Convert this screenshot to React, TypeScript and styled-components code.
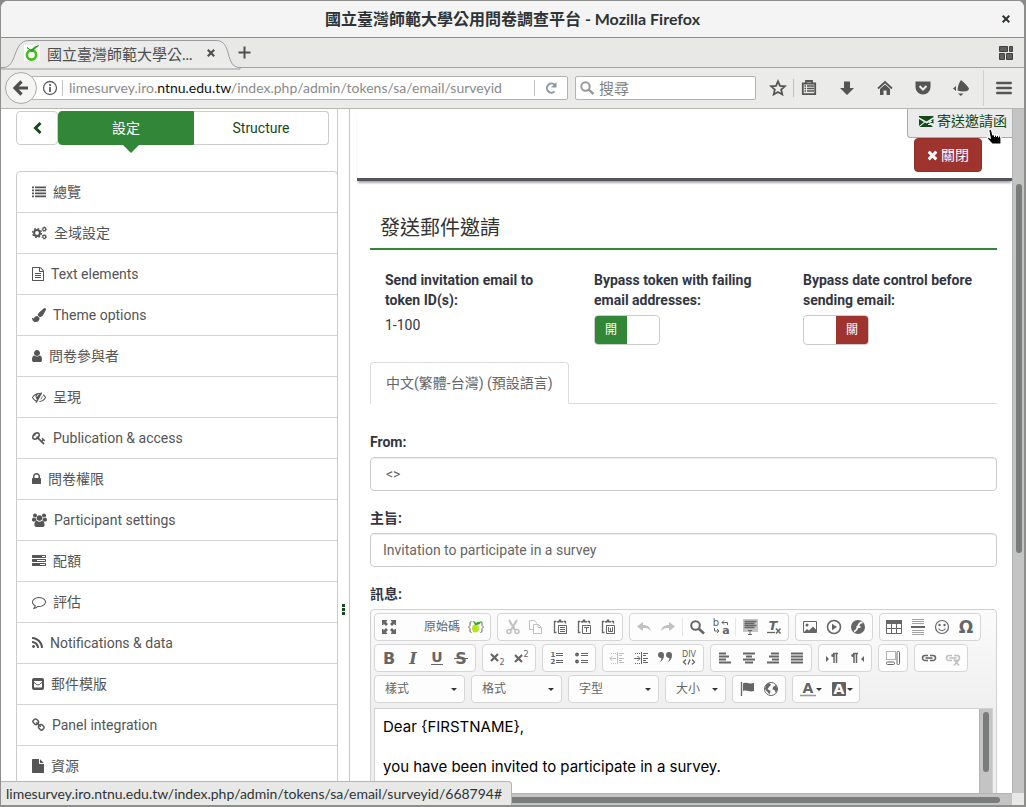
import React from "react";
import styled, { createGlobalStyle, css } from "styled-components";

const uiFont = `Lato, "Noto Sans CJK TC", sans-serif`;
const pageFont = `Roboto, "Noto Sans CJK TC", sans-serif`;
const green = "#328637";
const darkGreen = "#14491a";
const red = "#9f342f";

const GlobalStyle = createGlobalStyle`
  *, *::before, *::after { box-sizing: border-box; }
  body { margin: 0; background: #8a8a88; font-family: ${uiFont}; }
  button, input, select, textarea { font: inherit; color: inherit; margin: 0; }
  svg { display: block; flex: none; overflow: visible; }
`;

/* ---------- window frame ---------- */

const BrowserWindow = styled.div`
  position: relative;
  display: flex;
  flex-direction: column;
  height: 100vh;
  overflow: hidden;
  background: #fff;
  border: solid #8e8e8c;
  border-width: 1px 2px 2px 1px;
  border-radius: 8px 8px 0 0;
`;

const TitleBar = styled.header`
  display: grid;
  grid-template-columns: 36px 1fr 36px;
  align-items: center;
  height: 37px;
  background: #f4f4f4;
  border-bottom: 1px solid #8e908e;
`;

const WindowTitle = styled.h1`
  grid-column: 2;
  margin: 0;
  text-align: center;
  font-size: 16px;
  font-weight: 700;
  line-height: 20px;
  color: #2e3436;
  white-space: nowrap;
`;

const PlainButton = styled.button<{ $w?: number }>`
  display: flex;
  align-items: center;
  justify-content: center;
  flex: none;
  width: ${(p) => p.$w ?? 24}px;
  height: 24px;
  padding: 0;
  border: 0;
  background: none;
  color: #555;
`;

const TabStrip = styled.div`
  display: flex;
  align-items: center;
  height: 30px;
  padding: 0 6px 0 11px;
  background: #e8e8e6;
  border-bottom: 1px solid #a0a2a4;
`;

const BrowserTab = styled.div`
  position: relative;
  display: flex;
  align-items: center;
  gap: 7px;
  width: 218px;
  height: 30px;
  padding: 1px 15px 0 12px;
  font-size: 15px;
  color: #4a4e50;
`;

const TabShape = styled.svg`
  position: absolute;
  left: -10px;
  top: 1px;
`;

const TabLabel = styled.span`
  position: relative;
  flex: 1;
  white-space: nowrap;
`;

const Raised = styled.span`
  position: relative;
  display: flex;
`;

const Spacer = styled.div`
  flex: 1;
`;

const NavBar = styled.nav`
  display: flex;
  align-items: center;
  height: 41px;
  padding: 0 7px 0 4px;
  background: #ebebe9;
  border-bottom: 1px solid #b6b6b0;
  color: #505050;
`;

const BackButton = styled.button`
  position: relative;
  z-index: 1;
  display: flex;
  align-items: center;
  justify-content: center;
  flex: none;
  width: 32px;
  height: 32px;
  margin-right: -6px;
  padding: 0;
  border: 1px solid #a9a9a4;
  border-radius: 50%;
  background: #f5f5f4;
  color: #505050;
`;

const AddressBar = styled.div`
  display: flex;
  align-items: center;
  flex: 3 1 0;
  min-width: 0;
  height: 24px;
  padding-left: 10px;
  border: 1px solid #b4b4ae;
  border-radius: 2px;
  background: #fff;
`;

const Address = styled.div`
  flex: 1;
  min-width: 0;
  margin: 0 20px 0 2px;
  overflow: hidden;
  white-space: nowrap;
  font-size: 14px;
  line-height: 22px;
  color: #8a8a8a;
  outline: 0;
  b {
    font-weight: 400;
    color: #111;
  }
`;

const Divider = styled.span<{ $h: number }>`
  flex: none;
  width: 1px;
  height: ${(p) => p.$h}px;
  background: #c2c2be;
`;

const SearchField = styled.label`
  display: flex;
  align-items: center;
  gap: 5px;
  flex: 1 1 0;
  min-width: 0;
  height: 24px;
  margin: 0 7px;
  padding-left: 4px;
  border: 1px solid #b4b4ae;
  border-radius: 2px;
  background: #fff;
  color: #999;
  input {
    flex: 1;
    min-width: 0;
    padding: 0;
    border: 0;
    background: none;
    font-size: 15px;
    line-height: 22px;
  }
  input::placeholder {
    color: #808080;
  }
`;

const NavTools = styled.div`
  display: flex;
  align-items: center;
  flex: none;
`;

const Viewport = styled.div`
  display: grid;
  grid-template-columns: minmax(0, 1fr) 12px;
  grid-template-rows: minmax(0, 1fr) 12px;
  flex: 1;
  min-height: 0;
`;

const Page = styled.div`
  display: flex;
  overflow: hidden;
  font-family: ${pageFont};
  font-size: 14px;
  line-height: 20px;
`;

const VerticalTrack = styled.div`
  position: relative;
  padding: 75px 2px 0 3px;
  background: #c3c4c3;
  border-left: 1px solid #b2b3b2;
`;

const VerticalThumb = styled.div<{ $h: number }>`
  height: ${(p) => p.$h}px;
  border-radius: 3px;
  background: #787c7b;
`;

const HorizontalTrack = styled.div`
  padding: 3px 12px 2px 3px;
  background: #c3c4c3;
  border-top: 1px solid #b2b3b2;
`;

const HorizontalThumb = styled.div`
  height: 6px;
  border-radius: 3px;
  background: #787c7b;
`;

const Corner = styled.div`
  background: #e8e8e6;
`;

const StatusText = styled.div`
  position: absolute;
  left: 0;
  bottom: 0;
  height: 24px;
  padding: 0 9px 0 5px;
  border: solid #b4b4b0;
  border-width: 1px 1px 0 0;
  border-radius: 0 4px 0 0;
  background: #e8e8e6;
  color: #2e3436;
  font-size: 14px;
  line-height: 23px;
  white-space: nowrap;
`;

/* ---------- side menu ---------- */

const Sidebar = styled.aside`
  flex: none;
  width: 337px;
  padding-top: 2px;
  border-right: 1px solid #ccc;
`;

const ModeBar = styled.div`
  display: flex;
  padding: 0 8px 0 15px;
`;

const ModeButton = styled.button<{ $kind: "back" | "active" | "plain" }>`
  position: relative;
  display: flex;
  align-items: center;
  justify-content: center;
  flex: ${(p) => (p.$kind === "back" ? "0 0 42px" : "1 1 0")};
  height: 34px;
  padding: 0;
  border: 1px solid #ccc;
  border-radius: 4px;
  background: #fff;
  color: ${darkGreen};
  ${(p) =>
    p.$kind === "active" &&
    css`
      border-color: ${green};
      border-radius: 4px 0 0 4px;
      background: ${green};
      color: #fff;
      &::after {
        content: "";
        position: absolute;
        top: 33px;
        left: 50%;
        margin-left: -3px;
        border: 8px solid transparent;
        border-bottom: 0;
        border-top-color: ${green};
      }
    `}
  ${(p) =>
    p.$kind === "plain" &&
    css`
      border-left: 0;
      border-radius: 0 4px 4px 0;
    `}
`;

const MenuList = styled.ul`
  margin: 26px -1px 0 15px;
  padding: 0;
  list-style: none;
  border: 1px solid #ccc;
  border-radius: 4px 4px 0 0;
`;

const MenuLink = styled.a`
  display: flex;
  align-items: center;
  gap: 7px;
  height: 41px;
  padding-left: 15px;
  border-bottom: 1px solid #d4d4d4;
  color: #555;
  text-decoration: none;
`;

const DragHandle = styled.div`
  display: flex;
  justify-content: center;
  flex: none;
  width: 12px;
  padding-top: 495px;
  border-right: 1px solid #c4c4c4;
  color: ${darkGreen};
`;

/* ---------- main area ---------- */

const Main = styled.main`
  flex: 1;
  min-width: 0;
  padding-left: 7px;
  color: #333641;
`;

const ActionBar = styled.div`
  display: flex;
  flex-direction: column;
  align-items: flex-end;
  height: 72px;
  border-bottom: 3px solid #54545e;
  box-shadow: 0 3px 2px -1px #aaa;
`;

const SendLink = styled.a`
  position: relative;
  display: flex;
  align-items: center;
  gap: 3px;
  height: 29px;
  padding: 0 5px 4px 11px;
  border: solid #aaa;
  border-width: 0 0 1px 1px;
  border-radius: 0 0 0 4px;
  background: #ebebeb;
  color: ${darkGreen};
  text-decoration: none;
`;

const Pointer = styled.svg`
  position: absolute;
  right: 10px;
  top: 19px;
`;

const CloseButton = styled.button`
  display: flex;
  align-items: center;
  gap: 3px;
  height: 34px;
  margin-right: 30px;
  padding: 0 12px;
  border: 1px solid #8c2f2a;
  border-radius: 4px;
  background: ${red};
  color: #fff;
`;

const FormArea = styled.form`
  margin: 32px 15px 0 13px;
`;

const Heading = styled.h2`
  margin: 0 0 20px;
  padding: 0 10px 5px;
  border-bottom: 2px solid ${green};
  font-size: 20px;
  font-weight: 400;
  line-height: 30px;
  color: #333;
`;

const Options = styled.div`
  display: grid;
  grid-template-columns: repeat(3, 1fr);
  height: 92px;
`;

const Option = styled.div`
  padding: 0 15px;
`;

const OptionTitle = styled.div`
  margin-bottom: 5px;
  font-weight: 700;
`;

const Switch = styled.label<{ $on: boolean }>`
  display: grid;
  grid-template-columns: 1fr 1fr;
  width: 66px;
  height: 30px;
  overflow: hidden;
  border: 1px solid #ccc;
  border-radius: 4px;
  background: #fff;
  input {
    position: absolute;
    opacity: 0;
    pointer-events: none;
  }
  span {
    grid-column: ${(p) => (p.$on ? 1 : 2)};
    background: ${(p) => (p.$on ? green : red)};
    color: #fff;
    font-size: 12px;
    line-height: 28px;
    text-align: center;
  }
`;

const LanguageTabs = styled.div`
  display: flex;
  height: 42px;
  margin-bottom: 28px;
  border-bottom: 1px solid #ddd;
`;

const LanguageTab = styled.button`
  height: 42px;
  padding: 0 15px;
  border: 1px solid #ddd;
  border-bottom-color: #fff;
  border-radius: 4px 4px 0 0;
  background: #fff;
  color: #666;
`;

const Field = styled.div`
  margin-bottom: 17px;
`;

const FieldLabel = styled.label`
  display: block;
  margin-bottom: 5px;
  font-weight: 700;
`;

const TextInput = styled.input<{ $indent?: number }>`
  display: block;
  width: 100%;
  height: 34px;
  padding: 0 12px 0 ${(p) => p.$indent ?? 12}px;
  border: 1px solid #ccc;
  border-radius: 4px;
  background: #fff;
  box-shadow: inset 0 1px 1px #eee;
  color: #666;
`;

/* ---------- rich text editor ---------- */

const Editor = styled.div`
  padding: 0 3px 0 4px;
  border: 1px solid #d1d1d1;
  border-radius: 4px 4px 0 0;
  background: #efefef linear-gradient(#fbfbfb, #efefef 98px, #efefef);
`;

const Toolbar = styled.div`
  display: flex;
  flex-direction: column;
  gap: 3px;
  padding: 3px 0 5px;
  margin-left: -1px;
  color: #666;
`;

const ToolRow = styled.div`
  display: flex;
  flex-wrap: wrap;
  gap: 3px 6px;
`;

const ToolGroup = styled.div`
  display: flex;
  align-items: center;
  height: 28px;
  padding: 0 2px;
  border: 1px solid #d6d6d6;
  border-radius: 4px;
  background: #fdfdfd;
`;

const ToolButton = styled.button<{ $w?: number; $off?: boolean }>`
  display: flex;
  align-items: center;
  justify-content: center;
  width: ${(p) => p.$w ?? 24}px;
  height: 24px;
  padding: 0;
  border: 0;
  background: none;
  color: inherit;
  opacity: ${(p) => (p.$off ? 0.4 : 1)};
`;

const SourceButton = styled.button`
  width: 63px;
  height: 24px;
  padding: 0 4px 0 23px;
  border: 0;
  background: none;
  font-size: 12px;
  line-height: 24px;
  white-space: nowrap;
`;

const ToolSeparator = styled.span`
  width: 1px;
  height: 18px;
  margin: 0 2px;
  background: #e6e6e6;
`;

const Combo = styled.span<{ $w: number }>`
  display: grid;
  grid-template-columns: 1fr 20px;
  align-items: center;
  width: ${(p) => p.$w}px;
  height: 28px;
  border: 1px solid #d6d6d6;
  border-radius: 4px;
  background: #fdfdfd;
  select {
    grid-area: 1 / 1 / 2 / 3;
    height: 26px;
    padding: 0 0 0 10px;
    border: 0;
    background: none;
    appearance: none;
    font-size: 12px;
  }
  svg {
    grid-area: 1 / 2;
    justify-self: center;
    pointer-events: none;
  }
`;

const EditorBody = styled.div`
  display: flex;
  margin: 0 0 0 -1px;
  height: 200px;
  border: 1px solid #d1d1d1;
  background: #fff;
`;

const EditorText = styled.textarea`
  flex: 1;
  min-width: 0;
  padding: 8px;
  border: 0;
  resize: none;
  overflow: hidden;
  background: #fff;
  color: #000;
  font-family: Inter, sans-serif;
  font-size: 15px;
  line-height: 20px;
`;

const EditorTrack = styled.div`
  width: 13px;
  padding: 3px 3px 0;
  background: #c3c4c3;
  border-left: 1px solid #b2b3b2;
`;

/* ---------- icons ---------- */

type FontIconProps = { d: string; x?: number; w?: number; size?: number };

/* Icons on a 1792-unit grid, 128 units to the pixel. */
const FontIcon = ({ d, x = 0, w = 1792, size = 14 }: FontIconProps) => (
  <svg width={Math.round((w * size) / 1792)} height={size} viewBox={`${x} 0 ${w} 1792`} fill="currentColor" aria-hidden>
    <path d={d} />
  </svg>
);

const paths = {
  file: "M1152 512v-472q22 14 36 28l408 408q14 14 28 36h-472zm-128 32q0 40 28 68t68 28h544v1056q0 40-28 68t-68 28h-1344q-40 0-68-28t-28-68v-1600q0-40 28-68t68-28h800v544z",
  fileText:
    "M1596 380q28 28 48 76t20 88v1152q0 40-28 68t-68 28h-1344q-40 0-68-28t-28-68v-1600q0-40 28-68t68-28h896q40 0 88 20t76 48zm-444-244v376h376q-10-29-22-41l-313-313q-12-12-41-22zm384 1528v-1024h-416q-40 0-68-28t-28-68v-416h-768v1536h1280zm-1024-864q0-14 9-23t23-9h704q14 0 23 9t9 23v64q0 14-9 23t-23 9h-704q-14 0-23-9t-9-23v-64zm736 224q14 0 23 9t9 23v64q0 14-9 23t-23 9h-704q-14 0-23-9t-9-23v-64q0-14 9-23t23-9h704zm0 256q14 0 23 9t9 23v64q0 14-9 23t-23 9h-704q-14 0-23-9t-9-23v-64q0-14 9-23t23-9h704z",
  list: "M0 192h256v224h-256zM384 192h1408v224h-1408zM0 576h256v224h-256zM384 576h1408v224h-1408zM0 960h256v224h-256zM384 960h1408v224h-1408zM0 1344h256v224h-256zM384 1344h1408v224h-1408z",
  brush:
    "M1615 0q70 0 122.5 46.5t52.5 116.5q0 63-45 151-332 629-465 752-97 91-218 91-126 0-216.5-92.5t-90.5-219.5q0-128 92-212l638-579q59-54 130-54zm-909 1034q39 76 106.5 130t150.5 76l1 71q4 213-129.5 347t-348.5 134q-123 0-218-46.5t-152.5-127.5-86.5-183-29-220q7 5 41 30t62 44.5 59 36.5 46 17q41 0 55-37 25-66 57.5-112.5t69.5-76 88-47.5 103-25.5 125-10.5z",
  user: "M1536 1399q0 109-62.5 187t-150.5 78h-854q-88 0-150.5-78t-62.5-187q0-85 8.5-160.5t31.5-152 58.5-131 94-89 134.5-34.5q131 128 313 128t313-128q76 0 134.5 34.5t94 89 58.5 131 31.5 152 8.5 160.5zm-256-887q0 159-112.5 271.5t-271.5 112.5-271.5-112.5-112.5-271.5 112.5-271.5 271.5-112.5 271.5 112.5 112.5 271.5z",
  eyeSlash:
    "M555 1335l78-141q-87-63-136-159t-49-203q0-121 61-225-229 117-381 353 167 258 427 375zm389-759q0-20-14-34t-34-14q-125 0-214.5 89.5t-89.5 214.5q0 20 14 34t34 14 34-14 14-34q0-86 61-147t147-61q20 0 34-14t14-34zm363-191q0 7-1 9-106 189-316 567t-315 566l-49 89q-10 16-28 16-12 0-134-70-16-10-16-28 0-12 44-87-143-65-263.5-173t-208.5-245q-20-31-20-69t20-69q153-235 380-371t496-136q89 0 180 17l54-97q10-16 28-16 5 0 18 6t31 15.5 33 18.5 31.5 18.5 19.5 11.5q16 10 16 27zm37 447q0 139-79 253.5t-209 164.5l280-502q8 45 8 84zm448 128q0 35-20 69-39 64-109 145-150 172-347.5 267t-419.5 95l74-132q212-18 392.5-137t301.5-307q-115-179-282-294l63-112q95 64 182.5 153t144.5 184q20 34 20 69z",
  key: "M832 512q0-80-56-136t-136-56-136 56-56 136q0 42 19 83-41-19-83-19-80 0-136 56t-56 136 56 136 136 56 136-56 56-136q0-42-19-83 41 19 83 19 80 0 136-56t56-136zm851 704q0 17-49 66t-66 49q-9 0-28.5-16t-36.5-33-38.5-40-24.5-26l-96 96 220 220q28 28 28 68 0 42-39 81t-81 39q-40 0-68-28l-671-671q-176 131-365 131-163 0-265.5-102.5t-102.5-265.5q0-160 95-313t248-248 313-95q163 0 265.5 102.5t102.5 265.5q0 189-131 365l355 355 96-96q-3-3-26-24.5t-40-38.5-33-36.5-16-28.5q0-17 49-66t66-49q13 0 23 10 6 6 46 44.5t82 79.5 86.5 86 73 78 28.5 41z",
  lock: "M640 768h512v-192q0-106-75-181t-181-75-181 75-75 181v192zm832 96v576q0 40-28 68t-68 28h-960q-40 0-68-28t-28-68v-576q0-40 28-68t68-28h32v-192q0-184 132-316t316-132 316 132 132 316v192h32q40 0 68 28t28 68z",
  tasks:
    "M1024 1408h640v-128h-640v128zm-384-512h1024v-128h-1024v128zm640-512h384v-128h-384v128zm512 832v256q0 26-19 45t-45 19h-1664q-26 0-45-19t-19-45v-256q0-26 19-45t45-19h1664q26 0 45 19t19 45zm0-512v256q0 26-19 45t-45 19h-1664q-26 0-45-19t-19-45v-256q0-26 19-45t45-19h1664q26 0 45 19t19 45zm0-512v256q0 26-19 45t-45 19h-1664q-26 0-45-19t-19-45v-256q0-26 19-45t45-19h1664q26 0 45 19t19 45z",
  comment:
    "M896 384q-204 0-381.5 69.5t-282 187.5-104.5 255q0 112 71.5 213.5t201.5 175.5l87 50-27 96q-24 91-70 172 152-63 275-171l43-38 57 6q69 8 130 8 204 0 381.5-69.5t282-187.5 104.5-255-104.5-255-282-187.5-381.5-69.5zm896 512q0 174-120 321.5t-326 233-450 85.5q-70 0-145-8-198 175-460 242-49 14-114 22h-5q-15 0-27-10.5t-16-27.5v-1q-3-4-.5-12t2-10 4.5-9.5l6-9 7-8.5 8-9q7-8 31-34.5t34.5-38 31-39.5 32.5-51 27-59 26-76q-157-89-247.5-220t-90.5-281q0-174 120-321.5t326-233 450-85.5 450 85.5 326 233 120 321.5z",
  rss: "M576 1344q0 80-56 136t-136 56-136-56-56-136 56-136 136-56 136 56 56 136zm512 123q2 28-17 48-18 21-47 21h-135q-25 0-43-16.5t-20-41.5q-22-229-184.5-391.5t-391.5-184.5q-25-2-41.5-20t-16.5-43v-135q0-29 21-47 17-17 43-17h5q160 13 306 80.5t259 181.5q114 113 181.5 259t80.5 306zm512 2q2 27-18 47-18 20-46 20h-143q-26 0-44.5-17.5t-19.5-42.5q-12-215-101-408.5t-231.5-336-336-231.5-408.5-102q-25-1-42.5-19.5t-17.5-43.5v-143q0-28 20-46 18-18 44-18h3q262 13 501.5 120t425.5 294q187 186 294 425.5t120 501.5z",
  link: "M1520 1216q0-40-28-68l-208-208q-28-28-68-28-42 0-72 32 3 3 19 18.5t21.5 21.5 15 19 13 25.5 3.5 27.5q0 40-28 68t-68 28q-15 0-27.5-3.5t-25.5-13-19-15-21.5-21.5-18.5-19q-33 31-33 73 0 40 28 68l206 207q27 27 68 27 40 0 68-26l147-146q28-28 28-67zm-703-705q0-40-28-68l-206-207q-28-28-68-28-39 0-68 27l-147 146q-28 28-28 67 0 40 28 68l208 208q27 27 68 27 42 0 72-31-3-3-19-18.5t-21.5-21.5-15-19-13-25.5-3.5-27.5q0-40 28-68t68-28q15 0 27.5 3.5t25.5 13 19 15 21.5 21.5 18.5 19q33-31 33-73zm895 705q0 120-85 203l-147 146q-83 83-203 83-121 0-204-85l-206-207q-83-83-83-203 0-123 88-209l-88-88q-86 88-208 88-120 0-204-84l-208-208q-84-84-84-204t85-203l147-146q83-83 203-83 121 0 204 85l206 207q83 83 83 203 0 123-88 209l88 88q86-88 208-88 120 0 204 84l208 208q84 84 84 204z",
  cross:
    "M1490 1322q0 40-28 68l-136 136q-28 28-68 28t-68-28l-294-294-294 294q-28 28-68 28t-68-28l-136-136q-28-28-28-68t28-68l294-294-294-294q-28-28-28-68t28-68l136-136q28-28 68-28t68 28l294 294 294-294q28-28 68-28t68 28l136 136q28 28 28 68t-28 68l-294 294 294 294q28 28 28 68z",
};

const CogsIcon = () => (
  <svg width="15" height="14" viewBox="0 0 15 14" fill="none" stroke="currentColor" aria-hidden>
    <circle cx="5" cy="7" r="2.9" strokeWidth="2" />
    <circle cx="5" cy="7" r="4.4" strokeWidth="1.4" strokeDasharray="1.7 1.76" />
    <circle cx="12.3" cy="3.2" r="1.5" strokeWidth="1.2" />
    <circle cx="12.3" cy="3.2" r="2.3" strokeWidth="0.8" strokeDasharray="1 0.8" />
    <circle cx="12.3" cy="10.8" r="1.5" strokeWidth="1.2" />
    <circle cx="12.3" cy="10.8" r="2.3" strokeWidth="0.8" strokeDasharray="1 0.8" />
  </svg>
);

const UsersIcon = () => (
  <svg width="15" height="14" viewBox="0 0 15 14" fill="currentColor" aria-hidden>
    <circle cx="3" cy="2.6" r="2" />
    <circle cx="12" cy="2.6" r="2" />
    <path d="M0 7.3C0 5.5.6 4.6 1.3 4.6c1 .8 2.2.8 3 .3C4 6 4.3 6.8 4.8 7.4 4 7.4 3.4 7.9 3 8.4H1.2C.5 8.4 0 8 0 7.3zM15 7.3c0-1.8-.6-2.7-1.3-2.7-1 .8-2.2.8-3 .3.3 1.1 0 1.9-.5 2.5.8 0 1.4.5 1.8 1h1.8c.7 0 1.2-.4 1.2-1.1z" />
    <circle cx="7.5" cy="5" r="2.8" />
    <path d="M2.4 12c0-2.500.8-4.200 2.400-4.200 1.700 1.300 3.700 1.300 5.400 0 1.600 0 2.400 1.700 2.400 4.200 0 1.200-.8 1.900-1.800 1.900H4.200c-1 0-1.800-.7-1.800-1.900z" />
  </svg>
);

const MailSquareIcon = () => (
  <svg width="12" height="14" viewBox="0 0 12 14" aria-hidden>
    <rect y="1" width="12" height="12" rx="2" fill="currentColor" />
    <path d="M2 4h8v6.500H2z" fill="#fff" />
    <path d="M2 5.500 4.800 7.600q1.200.8 2.400 0L10 5.500" fill="none" stroke="currentColor" />
  </svg>
);

const SendIcon = () => (
  <svg width="15" height="13" viewBox="0 0 15 13" aria-hidden>
    <path d="M0 1h14.500v1L7.500 6.500 0 2.200zM0 4l5 3-5 4zM.5 12 6 7.600l1.500.9L9.500 7.400l4.500 4.600z" fill="currentColor" />
    <path d="M14.500 4v5l-1-1-3 0 3-1.500-1.500-1z" fill="currentColor" />
    <path d="M9 9.500h3.500l1.500 1.500" stroke="#ebebeb" fill="none" />
  </svg>
);

const Icon = ({ children, size = 16 }: { children: React.ReactNode; size?: number }) => (
  <svg width={size} height={size} viewBox="0 0 16 16" fill="none" stroke="currentColor" aria-hidden>
    {children}
  </svg>
);

const Letter = ({ x, y, size, children, italic, weight = 700, font = "DejaVu Sans" }: {
  x: number; y: number; size: number; children: string; italic?: boolean; weight?: number; font?: string;
}) => (
  <text x={x} y={y} fontFamily={font} fontSize={size} fontWeight={weight} fontStyle={italic ? "italic" : "normal"} fill="currentColor" stroke="none" textAnchor="middle">
    {children}
  </text>
);

const Caret = () => (
  <svg width="6" height="3" viewBox="0 0 6 3" fill="#333" aria-hidden>
    <path d="M0 0h6L3 3z" />
  </svg>
);

const Lines = ({ rows }: { rows: [number, number][] }) => (
  <Icon>
    {rows.map(([x, w], i) => (
      <path key={i} d={`M${x} ${3.5 + i * 3}h${w}`} strokeWidth="2" />
    ))}
  </Icon>
);

const Clipboard = ({ children }: { children?: React.ReactNode }) => (
  <Icon>
    <path d="M4.500 2.500h-2v11h2M11.500 2.500h2v2" strokeWidth="1.300" />
    <path d="M5 3.500V2h1.500l.5-1.500h2L9.500 2H11v1.500z" fill="currentColor" stroke="none" />
    <path d="M6.500 6.500h8v8h-8z" />
    {children}
  </Icon>
);

const Chain = () => (
  <>
    <path d="M7 5.500H4a2.500 2.500 0 0 0 0 5h3M9 5.500h3a2.500 2.500 0 0 1 0 5H9" strokeWidth="1.600" />
    <path d="M4.500 8h7" strokeWidth="1.600" />
  </>
);

/* ---------- data ---------- */

const menuItems: { label: string; icon: React.ReactNode }[] = [
  { label: "總覽", icon: <FontIcon d={paths.list} /> },
  { label: "全域設定", icon: <CogsIcon /> },
  { label: "Text elements", icon: <FontIcon d={paths.fileText} x={128} w={1536} /> },
  { label: "Theme options", icon: <FontIcon d={paths.brush} /> },
  { label: "問卷參與者", icon: <FontIcon d={paths.user} x={256} w={1280} /> },
  { label: "呈現", icon: <FontIcon d={paths.eyeSlash} /> },
  { label: "Publication & access", icon: <FontIcon d={paths.key} /> },
  { label: "問卷權限", icon: <FontIcon d={paths.lock} x={320} w={1152} /> },
  { label: "Participant settings", icon: <UsersIcon /> },
  { label: "配額", icon: <FontIcon d={paths.tasks} /> },
  { label: "評估", icon: <FontIcon d={paths.comment} /> },
  { label: "Notifications & data", icon: <FontIcon d={paths.rss} x={192} w={1408} /> },
  { label: "郵件模版", icon: <MailSquareIcon /> },
  { label: "Panel integration", icon: <FontIcon d={paths.link} x={64} w={1664} /> },
  { label: "資源", icon: <FontIcon d={paths.file} x={128} w={1536} /> },
];

type Tool = { name: string; icon: React.ReactNode; off?: boolean; w?: number };

const Tools = ({ items }: { items: Tool[] }) => (
  <>
    {items.map((t) => (
      <ToolButton key={t.name} type="button" aria-label={t.name} $off={t.off} $w={t.w} disabled={t.off}>
        {t.icon}
      </ToolButton>
    ))}
  </>
);

const clipboardTools: Tool[] = [
  { name: "Cut", off: true, icon: <Icon><path d="M5 1l6 10M13 1L7 11" strokeWidth="2" /><circle cx="5" cy="12.500" r="2" strokeWidth="1.500" /><circle cx="13" cy="12.500" r="2" strokeWidth="1.500" /></Icon> },
  { name: "Copy", off: true, icon: <Icon><path d="M5.500 10.500h-4v-9h5l2 2v1M5.500 5.500h5l3 3v6h-8zM10 5.500v3h3" /></Icon> },
  { name: "Paste", icon: <Clipboard><path d="M8 8.500h5M8 10.500h5M8 12.500h5" /></Clipboard> },
  { name: "Paste as text", icon: <Clipboard><path d="M8 8.500h5M10.500 8.500V13" /></Clipboard> },
  { name: "Paste from Word", icon: <Clipboard><path d="M8.500 8v4.500h4V8M10.500 9v3" /></Clipboard> },
];

const historyTools: Tool[] = [
  { name: "Undo", off: true, icon: <Icon><path d="M1 7.500 7 3v3c4 0 7 1.500 8 6-2-2.500-4.500-3-8-3v3z" fill="currentColor" stroke="none" /></Icon> },
  { name: "Redo", off: true, icon: <Icon><path d="M15 7.500 9 3v3c-4 0-7 1.500-8 6 2-2.500 4.500-3 8-3v3z" fill="currentColor" stroke="none" /></Icon> },
];

const findTools: Tool[] = [
  { name: "Find", icon: <Icon><circle cx="6.500" cy="6.500" r="4.300" strokeWidth="2" /><path d="M9.500 9.500 15 14.500" strokeWidth="2.600" /></Icon> },
  { name: "Replace", icon: <Icon><Letter x={3} y={7} size={10} weight={400}>b</Letter><Letter x={13} y={15} size={11}>a</Letter><path d="M14.500 6V3.500H9M11 1.500 9 3.500l2 2M1.500 9v3H6M4 10l2 2-2 2" /></Icon> },
];

const selectTools: Tool[] = [
  { name: "Select all", icon: <Icon><path d="M1 0h15v13H1z" fill="#c4c4c4" stroke="none" /><path d="M2.500 2.500h12M2.500 4.500h10M2.500 6.500h12M2.500 8.500h10" strokeWidth="1.300" /><path d="M6 11.500h4M8 12v3M6 15.500h4" /></Icon> },
  { name: "Remove format", icon: <Icon><Letter x={7} y={11} size={13} italic>T</Letter><path d="M1 13.500h8" strokeWidth="1.300" /><path d="M10 9.500l4.500 5M14.500 9.500l-4.500 5" strokeWidth="1.500" /></Icon> },
];

const mediaTools: Tool[] = [
  { name: "Image", icon: <Icon><path d="M1.500 2.500h13v11h-13z" /><circle cx="5" cy="6" r="1.500" fill="currentColor" stroke="none" /><path d="M2 13l3-3 2 1.500 4-4 3.500 3.500v2z" fill="currentColor" stroke="none" /></Icon> },
  { name: "Video", icon: <Icon><circle cx="8" cy="8" r="6.500" strokeWidth="1.600" /><path d="M6 4.800v6.400L11 8z" fill="currentColor" stroke="none" /></Icon> },
  { name: "Flash", icon: <Icon><circle cx="8" cy="8" r="7" fill="currentColor" stroke="none" /><path d="M12.500 3.500c-3-.5-3.500 1.500-4.500 4s-1.500 4.500-4 5M6.500 8h4" stroke="#fff" strokeWidth="1.800" /></Icon> },
];

const insertTools: Tool[] = [
  { name: "Table", icon: <Icon><path d="M0 1h16v4H0z" fill="currentColor" stroke="none" /><path d="M.5 5v9.500h15V5M.5 9.500h15M5.500 5v9M10.500 5v9" /></Icon> },
  { name: "Horizontal line", icon: <Icon><path d="M2 .5h12M2 2.500h12M2 4.500h12M2 11.500h12M2 13.500h12M2 15.500h12" opacity=".6" /><path d="M1 8h14" strokeWidth="2" /></Icon> },
  { name: "Smiley", icon: <Icon><circle cx="8" cy="8" r="6.500" strokeWidth="1.200" /><circle cx="5.500" cy="6" r="1.200" fill="currentColor" stroke="none" /><circle cx="10.500" cy="6" r="1.200" fill="currentColor" stroke="none" /><path d="M4.500 9.500q3.500 4.500 7 0" strokeWidth="1.200" /></Icon> },
  { name: "Special character", icon: <Icon><Letter x={8} y={14} size={17}>Ω</Letter></Icon> },
];

const styleTools: Tool[] = [
  { name: "Bold", icon: <Icon><Letter x={8} y={14} size={16}>B</Letter></Icon> },
  { name: "Italic", icon: <Icon><Letter x={8} y={14} size={16} italic font="DejaVu Serif">I</Letter></Icon> },
  { name: "Underline", icon: <Icon><Letter x={8} y={12} size={14}>U</Letter><path d="M2 14.500h12" /></Icon> },
  { name: "Strikethrough", icon: <Icon><Letter x={8} y={14} size={16}>S</Letter><path d="M1 8.500h14" /></Icon> },
];

const scriptTools: Tool[] = [
  { name: "Subscript", icon: <Icon><path d="M2 4l7 7M9 4l-7 7" strokeWidth="2.200" /><Letter x={13} y={15} size={8} weight={400}>2</Letter></Icon> },
  { name: "Superscript", icon: <Icon><path d="M2 5l7 7M9 5l-7 7" strokeWidth="2.200" /><Letter x={13} y={7} size={8} weight={400}>2</Letter></Icon> },
];

const listTools: Tool[] = [
  { name: "Numbered list", icon: <Icon><Letter x={4} y={7} size={7}>1</Letter><Letter x={4} y={14} size={7}>2</Letter><path d="M7 3.500h7M7 5.500h7M7 10.500h7M7 12.500h7" /></Icon> },
  { name: "Bulleted list", icon: <Icon><circle cx="4" cy="4.500" r="1.900" fill="currentColor" stroke="none" /><circle cx="4" cy="11.500" r="1.900" fill="currentColor" stroke="none" /><path d="M8 3.500h7M8 5.500h7M8 10.500h7M8 12.500h7" /></Icon> },
];

const blockTools: Tool[] = [
  { name: "Decrease indent", off: true, icon: <Icon><path d="M8.500 2v12M1 8.500h6M3.500 6 1 8.500 3.500 11M10 3.500h5M10 5.500h3M10 8.500h5M10 10.500h3M10 12.500h5" /><path d="M2 3.500h5M2 13.500h5" strokeDasharray="1 1" /></Icon> },
  { name: "Increase indent", icon: <Icon><path d="M8.500 2v12M1 8.500h6M4.500 6 7 8.500 4.500 11M10 3.500h5M10 5.500h3M10 8.500h5M10 10.500h3M10 12.500h5" /><path d="M2 3.500h5M2 13.500h5" strokeDasharray="1 1" /></Icon> },
  { name: "Block quote", icon: <Icon><path d="M1 5a3 3 0 0 1 6 0c0 3.500-1.500 6-5 7.500C4 11 4.500 9.500 4.300 8 2.500 8 1 7 1 5zM9 5a3 3 0 0 1 6 0c0 3.500-1.500 6-5 7.500 2-1.500 2.500-3 2.300-4.500C10.500 8 9 7 9 5z" fill="currentColor" stroke="none" /></Icon> },
  { name: "Create div", icon: <Icon><Letter x={8} y={7} size={8} weight={400}>DIV</Letter><path d="M5 9.500 2.500 12 5 14.500M11 9.500l2.500 2.500-2.500 2.500M9 9.500l-2 5" strokeWidth="1.300" /></Icon> },
];

const alignTools: Tool[] = [
  { name: "Align left", icon: <Lines rows={[[2, 7], [2, 10], [2, 7], [2, 12]]} /> },
  { name: "Centre", icon: <Lines rows={[[2, 12], [5, 6], [2, 12], [4, 8]]} /> },
  { name: "Align right", icon: <Lines rows={[[6, 8], [4, 10], [7, 7], [2, 12]]} /> },
  { name: "Justify", icon: <Lines rows={[[2, 12], [2, 12], [2, 12], [2, 12]]} /> },
];

const Pilcrow = ({ x }: { x: number }) => (
  <path d={`M${x} 3.500h5M${x + 1} 4v9M${x + 3.5} 4v9M${x} 4v3M${x - 1} 4.500v2`} strokeWidth="1.500" />
);

const directionTools: Tool[] = [
  { name: "Left to right", icon: <Icon><path d="M1 6v6l3-3z" fill="currentColor" stroke="none" /><Pilcrow x={8} /></Icon> },
  { name: "Right to left", icon: <Icon><path d="M15 6v6l-3-3z" fill="currentColor" stroke="none" /><Pilcrow x={4} /></Icon> },
];

const linkTools: Tool[] = [
  { name: "Link", icon: <Icon><Chain /></Icon> },
  { name: "Unlink", off: true, icon: <Icon><Chain /><path d="M9 9.500l5 6M14 9.500l-5 6" strokeWidth="1.600" /></Icon> },
];

const anchorTools: Tool[] = [
  { name: "Anchor", icon: <Icon><path d="M2.500 1v14" strokeWidth="1.300" /><path d="M4 2.500c3-2 5 1 11-.5v8C11 11.500 8 8.500 4 10z" fill="currentColor" stroke="none" /></Icon> },
  { name: "Internal link", icon: <Icon><circle cx="8" cy="8" r="6.500" /><path d="M3 4l3-2 2 1.500-1.500 2L4.500 8l3 2-1 3.500-2-2.500-2.500-3zM10 6l3-2 1.500 4-1.500 4-1.500-3-2-.5z" fill="currentColor" stroke="none" /></Icon> },
];

const App = () => {
  const combos: [string, number][] = [["樣式", 91], ["格式", 91], ["字型", 91], ["大小", 61]];
  return (
    <>
      <GlobalStyle />
      <BrowserWindow>
        <TitleBar>
          <WindowTitle>國立臺灣師範大學公用問卷調查平台 - Mozilla Firefox</WindowTitle>
          <PlainButton $w={36} aria-label="Close window">
            <svg width="8" height="8" viewBox="0 0 8 8" stroke="#2e3436" strokeWidth="2"><path d="M.7.7l6.600 6.600M7.300.7L.7 7.300" /></svg>
          </PlainButton>
        </TitleBar>
        <TabStrip>
          <BrowserTab>
            <TabShape width="240" height="30" viewBox="0 0 240 30" aria-hidden>
              <path d="M-1 28.500H1C16 28.500 10 1.500 27 1.500H214C231 1.500 222 28.500 238 28.500V30H-1z" fill="#ebebe9" stroke="#9a9ca0" />
            </TabShape>
            <Raised>
              <svg width="16" height="16" viewBox="0 0 16 16" aria-hidden>
                <path d="M0 0h16v16H0z" fill="#fff" />
                <circle cx="7.500" cy="10" r="4.600" fill="none" stroke="#40c010" strokeWidth="2.600" />
                <path d="M3 2.500 7 5.500Q10 1.500 14.500.7 10.500 3 8 6.500z" fill="#1ea01e" stroke="#1ea01e" />
              </svg>
            </Raised>
            <TabLabel>國立臺灣師範大學公...</TabLabel>
            <Raised>
              <svg width="8" height="8" viewBox="0 0 8 8" stroke="#505050" strokeWidth="2.200"><path d="M.8.8l6.400 6.400M7.200.8L.8 7.200" /></svg>
            </Raised>
          </BrowserTab>
          <PlainButton $w={28} aria-label="New tab">
            <svg width="13" height="13" viewBox="0 0 13 13" stroke="#505050" strokeWidth="2"><path d="M6.500.5v12M.5 6.500h12" /></svg>
          </PlainButton>
          <Spacer />
          <PlainButton aria-label="Tab groups">
            <svg width="14" height="14" viewBox="0 0 14 14" fill="#606060" stroke="#404040">
              <path d="M.5.500h8v5h-8zM10.500.5h3v5h-3zM.5 7.500h5v6h-5zM7.500 7.500h6v6h-6z" />
            </svg>
          </PlainButton>
        </TabStrip>
        <NavBar>
          <BackButton aria-label="Back">
            <Icon size={16}><path d="M8.500 1.500 2 8l6.500 6.500M2.500 8H15" strokeWidth="3.200" /></Icon>
          </BackButton>
          <AddressBar>
            <svg width="16" height="16" viewBox="0 0 16 16" fill="none" stroke="#606060" aria-hidden>
              <circle cx="8" cy="8" r="6.500" strokeWidth="1.300" />
              <path d="M8 4v2M8 7v5" strokeWidth="1.800" />
            </svg>
            <svg width="9" height="16" viewBox="0 0 9 16" stroke="#c2c2be" aria-hidden><path d="M4.500 0v16" /></svg>
            <Address role="textbox" aria-label="Address">
              limesurvey.iro.<b>ntnu.edu.tw</b>/index.php/admin/tokens/sa/email/surveyid
            </Address>
            <Divider $h={16} />
            <PlainButton $w={32} aria-label="Reload">
              <svg width="12" height="12" viewBox="0 0 12 12" fill="none" stroke="#8d99a6" strokeWidth="2"><path d="M9.600 9.600a4.600 4.600 0 1 1 .3-6.600" /><path d="M11.500 0v5.500H6z" fill="#8d99a6" stroke="none" /></svg>
            </PlainButton>
          </AddressBar>
          <SearchField>
            <svg width="14" height="14" viewBox="0 0 14 14" fill="none" stroke="currentColor" aria-hidden>
              <circle cx="5.500" cy="5.500" r="4.200" strokeWidth="2" /><path d="M8.500 8.500l5 4.500" strokeWidth="2.400" />
            </svg>
            <input placeholder="搜尋" aria-label="搜尋" />
          </SearchField>
          <NavTools>
            <PlainButton $w={30} aria-label="Bookmark">
              <Icon><path d="M8 1.300l2 4.500 4.900.5-3.700 3.300 1.100 4.900L8 12l-4.300 2.500 1.100-4.900L1.100 6.300 6 5.800z" strokeWidth="1.800" /></Icon>
            </PlainButton>
            <Divider $h={18} />
            <PlainButton $w={30} aria-label="Bookmarks list">
              <Icon><path d="M5 2.500V1h6v1.500M1.800 3.500h12.400v10.700H1.800z" strokeWidth="1.800" /><path d="M3.500 6h1.500M3.500 8.500h1.500M3.500 11h1.500M6 6h7M6 8.500h7M6 11h7" strokeWidth="1.300" /></Icon>
            </PlainButton>
            <PlainButton $w={46} aria-label="Downloads">
              <Icon><path d="M5 1.500h6V8h4l-7 7-7-7h4z" fill="currentColor" stroke="none" /></Icon>
            </PlainButton>
            <PlainButton $w={30} aria-label="Home">
              <Icon><path d="M1 8.500 8 2l7 6.500" strokeWidth="1.800" /><path d="M3 9l5-4.500L13 9v6H9.500v-4.500h-3V15H3z" fill="currentColor" stroke="none" /></Icon>
            </PlainButton>
            <PlainButton $w={46} aria-label="Pocket">
              <Icon><path d="M.5 1.500h15v5.500a7.500 7.500 0 0 1-15 0z" fill="currentColor" stroke="none" /><path d="M4.500 6 8 9.500 11.500 6" stroke="#eee" strokeWidth="2" /></Icon>
            </PlainButton>
            <PlainButton $w={30} aria-label="Notifications">
              <Icon><path d="M8 0Q14 5 16 8.500q0 1.500-2 2.500-4 1-9.500-.5Q5 4 8 0zM5 13.500h5.500L7.800 16zM3 6v5L0 8.500z" fill="currentColor" stroke="none" /></Icon>
            </PlainButton>
            <svg width="15" height="36" viewBox="0 0 15 36" stroke="#d0d0cc" aria-hidden><path d="M7.500 0v36" /></svg>
            <PlainButton $w={26} aria-label="Menu">
              <Icon><path d="M1.300 3h13.400M1.300 8h13.400M1.300 13h13.400" strokeWidth="2.600" strokeLinecap="round" /></Icon>
            </PlainButton>
          </NavTools>
        </NavBar>

        <Viewport>
          <Page>
            <Sidebar>
              <ModeBar>
                <ModeButton $kind="back" aria-label="Collapse">
                  <svg width="9" height="12" viewBox="0 0 9 12" fill="none" stroke="currentColor" strokeWidth="3"><path d="M7.500 1 2.500 6l5 5" /></svg>
                </ModeButton>
                <ModeButton $kind="active">設定</ModeButton>
                <ModeButton $kind="plain">Structure</ModeButton>
              </ModeBar>
              <MenuList>
                {menuItems.map((m) => (
                  <li key={m.label}>
                    <MenuLink href="#">
                      {m.icon}
                      {m.label}
                    </MenuLink>
                  </li>
                ))}
              </MenuList>
            </Sidebar>
            <DragHandle>
              <svg width="3" height="11" viewBox="0 0 3 11" fill="currentColor" aria-hidden><path d="M0 0h3v3H0zM0 4h3v3H0zM0 8h3v3H0z" /></svg>
            </DragHandle>
            <Main>
              <ActionBar>
                <SendLink href="#">
                  <SendIcon />
                  寄送邀請函
                  <Pointer width="16" height="18" viewBox="0 0 16 18" aria-hidden>
                    <path d="M3.500 1.500c1.200-.8 2 .2 2.200 1l1 4.200 6 .8c1.800.3 2.300 1.300 2.300 3v5.500H6L1.500 11c-.8-1.500.3-2.200 1.300-1.800l1.500.8L3 3.500c-.2-1 0-1.600.5-2z" fill="#000" stroke="#fff" strokeWidth="1.200" />
                    <path d="M8.500 7v2M10.500 7v2M12.500 7.500v2" stroke="#fff" />
                  </Pointer>
                </SendLink>
                <CloseButton type="button">
                  <FontIcon d={paths.cross} x={192} w={1408} />
                  關閉
                </CloseButton>
              </ActionBar>
              <FormArea onSubmit={(e) => e.preventDefault()}>
                <Heading>發送郵件邀請</Heading>
                <Options>
                  <Option>
                    <OptionTitle>Send invitation email to token ID(s):</OptionTitle>
                    1-100
                  </Option>
                  <Option>
                    <OptionTitle id="bypass-token">Bypass token with failing email addresses:</OptionTitle>
                    <Switch $on>
                      <input type="checkbox" defaultChecked aria-labelledby="bypass-token" />
                      <span>開</span>
                    </Switch>
                  </Option>
                  <Option>
                    <OptionTitle id="bypass-date">Bypass date control before sending email:</OptionTitle>
                    <Switch $on={false}>
                      <input type="checkbox" aria-labelledby="bypass-date" />
                      <span>關</span>
                    </Switch>
                  </Option>
                </Options>
                <LanguageTabs>
                  <LanguageTab type="button">中文(繁體-台灣) (預設語言)</LanguageTab>
                </LanguageTabs>
                <Field>
                  <FieldLabel htmlFor="from">From:</FieldLabel>
                  <TextInput id="from" defaultValue="<>" $indent={15} />
                </Field>
                <Field>
                  <FieldLabel htmlFor="subject">主旨:</FieldLabel>
                  <TextInput id="subject" defaultValue="Invitation to participate in a survey" />
                </Field>
                <FieldLabel htmlFor="message">訊息:</FieldLabel>
                <Editor>
                  <Toolbar>
                    <ToolRow>
                      <ToolGroup>
                        <ToolButton type="button" aria-label="Maximize">
                          <Icon><path d="M1 1h5v1.500H4.500l2.500 2.500-2 2-2.500-2.500V6H1zM15 1v5h-1.500V4.500L11 7 9 5l2.500-2.500H10V1zM1 15v-5h1.500v1.500L5 9l2 2-2.500 2.500H6V15zM15 15h-5v-1.500h1.500L9 11l2-2 2.500 2.500V10H15z" fill="currentColor" stroke="none" /></Icon>
                        </ToolButton>
                        <SourceButton type="button">原始碼</SourceButton>
                        <ToolButton type="button" aria-label="Placeholder fields">
                          <Icon>
                            <path d="M3.500 2.500Q2 2.500 2 4v2.500L.5 8 2 9.500V12q0 1.500 1.500 1.500M12.500 2.500q1.500 0 1.500 1.500v2.500L15.500 8 14 9.500V12q0 1.500-1.500 1.500" />
                            <ellipse cx="7.500" cy="9.500" rx="3.400" ry="3.900" fill="#b4e61e" stroke="none" />
                            <path d="M7 6q-1-3-3-4 3 0 4 2 2-2 5-1-1 3-5 3z" fill="#3fa02a" stroke="none" />
                          </Icon>
                        </ToolButton>
                      </ToolGroup>
                      <ToolGroup><Tools items={clipboardTools} /></ToolGroup>
                      <ToolGroup>
                        <Tools items={historyTools} />
                        <ToolSeparator />
                        <Tools items={findTools} />
                        <ToolSeparator />
                        <Tools items={selectTools} />
                      </ToolGroup>
                      <ToolGroup><Tools items={mediaTools} /></ToolGroup>
                      <ToolGroup><Tools items={insertTools} /></ToolGroup>
                    </ToolRow>
                    <ToolRow>
                      <ToolGroup><Tools items={styleTools} /></ToolGroup>
                      <ToolGroup><Tools items={scriptTools} /></ToolGroup>
                      <ToolGroup><Tools items={listTools} /></ToolGroup>
                      <ToolGroup><Tools items={blockTools} /></ToolGroup>
                      <ToolGroup><Tools items={alignTools} /></ToolGroup>
                      <ToolGroup><Tools items={directionTools} /></ToolGroup>
                      <ToolGroup>
                        <ToolButton type="button" aria-label="Show blocks">
                          <Icon><path d="M1.500 1.500h9v8h-9z" strokeDasharray="1 1" /><rect x="1.500" y="12" width="8" height="2.500" rx="1" /><rect x="12" y="1.500" width="2.500" height="13" rx="1" /></Icon>
                        </ToolButton>
                      </ToolGroup>
                      <ToolGroup><Tools items={linkTools} /></ToolGroup>
                    </ToolRow>
                    <ToolRow>
                      {combos.map(([name, w]) => (
                        <Combo key={name} $w={w}>
                          <select aria-label={name} defaultValue={name}>
                            <option>{name}</option>
                          </select>
                          <Caret />
                        </Combo>
                      ))}
                      <ToolGroup><Tools items={anchorTools} /></ToolGroup>
                      <ToolGroup>
                        <ToolButton type="button" $w={31} aria-label="Text colour">
                          <Icon><Letter x={8} y={12} size={14}>A</Letter><path d="M0 14.500h16" stroke="#999" strokeWidth="1.600" /></Icon>
                          <Caret />
                        </ToolButton>
                        <ToolButton type="button" $w={31} aria-label="Background colour">
                          <svg width="16" height="16" viewBox="0 0 16 16" color="#fff" aria-hidden>
                            <rect x="1" y="1" width="14" height="14" rx="1" fill="#626262" />
                            <Letter x={8} y={13} size={14}>A</Letter>
                          </svg>
                          <Caret />
                        </ToolButton>
                      </ToolGroup>
                    </ToolRow>
                  </Toolbar>
                  <EditorBody>
                    <EditorText id="message" defaultValue={"Dear {FIRSTNAME},\n\nyou have been invited to participate in a survey."} />
                    <EditorTrack><VerticalThumb $h={60} /></EditorTrack>
                  </EditorBody>
                </Editor>
              </FormArea>
            </Main>
          </Page>
          <VerticalTrack><VerticalThumb $h={369} /></VerticalTrack>
          <HorizontalTrack><HorizontalThumb /></HorizontalTrack>
          <Corner />
        </Viewport>
        <StatusText>limesurvey.iro.ntnu.edu.tw/index.php/admin/tokens/sa/email/surveyid/668794#</StatusText>
      </BrowserWindow>
    </>
  );
};

export default App;
